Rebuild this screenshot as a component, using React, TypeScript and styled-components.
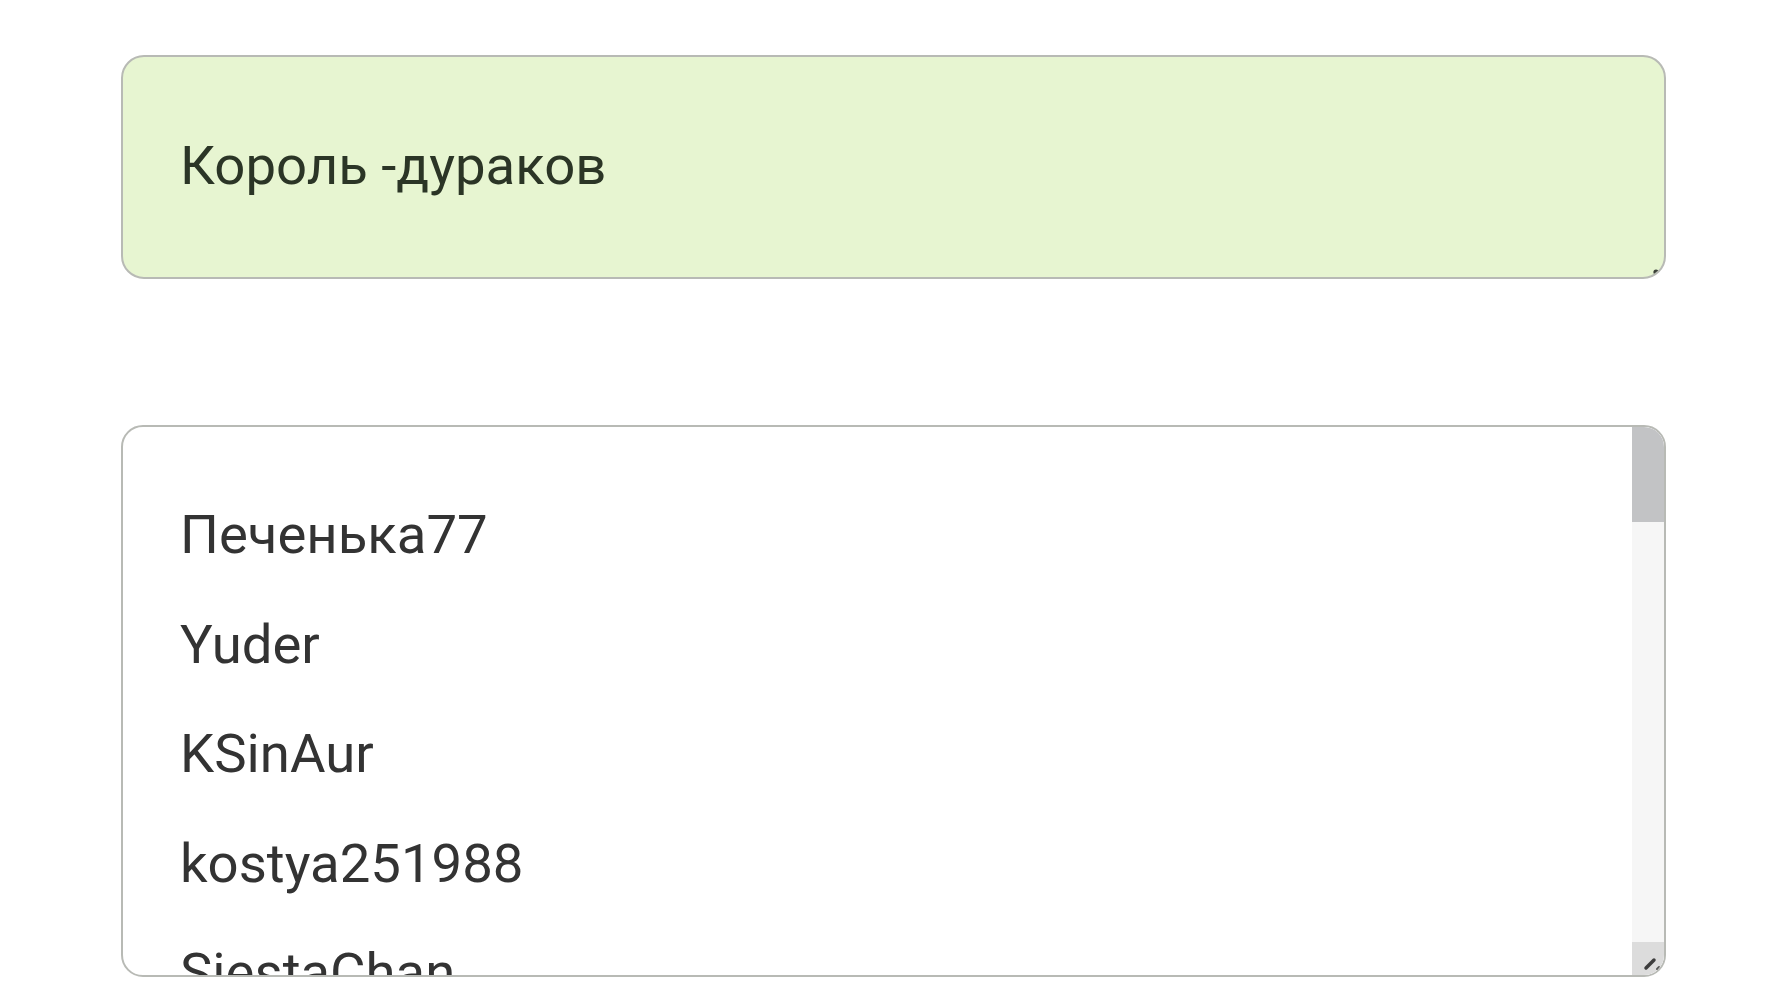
import React from 'react';
import styled, { createGlobalStyle } from 'styled-components';

// TYPES
interface FieldProps {
    tint?: boolean;
}

// STYLES
const GlobalStyle = createGlobalStyle`
    html, body {
        margin: 0;
        padding: 0;
        background: #ffffff;
        font-family: Roboto, "Noto Sans", "Liberation Sans", sans-serif;
    }
`;

const Page = styled.div`
    display: flex;
    flex-direction: column;
    gap: 146px;
    padding: 55px 0 0 121px;
    width: 1545px;
`;

const Field = styled.div<FieldProps>`
    box-sizing: border-box;
    width: 1545px;
    border: 2px solid #b8bab5;
    border-radius: 23px;
    background: ${({ tint }) => (tint ? '#e7f5d1' : '#ffffff')};
    overflow: hidden;
`;

const NameField = styled(Field)`
    height: 224px;
    display: flex;
    align-items: center;
    justify-content: space-between;
    padding: 0 5px 0 57px;
`;

const NameText = styled.span`
    font-size: 54.5px;
    color: #2b3526;
    margin-top: -4px;
`;

const Grip = styled.svg`
    align-self: flex-end;
    margin-bottom: 2px;
`;

const ListField = styled(Field)`
    height: 552px;
    display: flex;
    border-radius: 22px;
`;

const Items = styled.ul`
    flex: 1;
    list-style: none;
    margin: 0;
    padding: 53px 0 0 57px;
    overflow: hidden;
`;

const Item = styled.li`
    font-size: 54.5px;
    line-height: 109.5px;
    color: #333333;
`;

const Scrollbar = styled.div`
    width: 32px;
    display: flex;
    flex-direction: column;
    background: #f6f6f6;
`;

const Thumb = styled.div`
    height: 95px;
    background: #c2c3c5;
`;

const Track = styled.div`
    flex: 1;
`;

const Resizer = styled.div`
    height: 33px;
    background: #dcdcdc;
    display: flex;
`;

const names = ['Печенька77', 'Yuder', 'KSinAur', 'kostya251988', 'SiestaChan'];

// COMPONENT DEFINITION
const App = (): JSX.Element => (
    <>
        <GlobalStyle />
        <Page>
            <NameField tint>
                <NameText>Король -дураков</NameText>
                <Grip width="6" height="6" viewBox="0 0 6 6">
                    <circle cx="3" cy="3" r="2.6" fill="#3a3f38" />
                </Grip>
            </NameField>
            <ListField>
                <Items>
                    {names.map((name) => (
                        <Item key={name}>{name}</Item>
                    ))}
                </Items>
                <Scrollbar>
                    <Thumb />
                    <Track />
                    <Resizer>
                        <svg width="32" height="33" viewBox="0 0 32 33">
                            <path d="M14 26 L22 18" stroke="#3d3d3d" strokeWidth="3.5" strokeLinecap="round" />
                            <path d="M25 27 L27 25" stroke="#555" strokeWidth="2" strokeLinecap="round" />
                        </svg>
                    </Resizer>
                </Scrollbar>
            </ListField>
        </Page>
    </>
);

export default App;
